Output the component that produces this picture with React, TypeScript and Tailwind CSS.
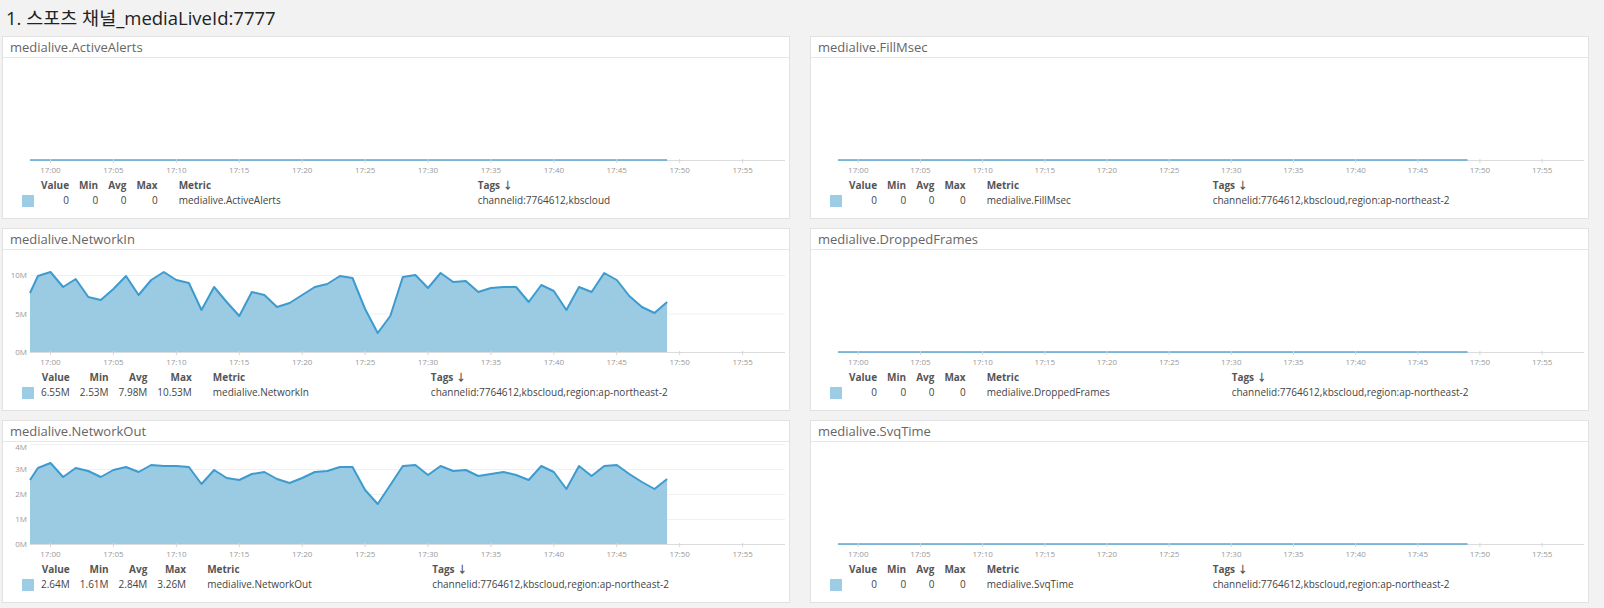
import React from "react";

type Series = { start: number; pts: number[] } | null;

const LEFT_W = 788;
const RIGHT_W = 779;

// heights in px on a 100px plot, one point per minute from 16:59 to 17:49
const netIn: Series = {
  start: 59,
  pts: [76, 80, 65, 73, 55, 52, 63, 76, 57, 72, 80, 72, 69, 42, 65, 50, 36, 60, 57, 45, 49, 57, 65, 68, 76, 74, 43, 19, 36, 75, 77, 64, 79, 70, 71, 60, 64, 65, 65, 50, 67, 61, 42, 65, 60, 79, 72, 56, 45, 39, 50],
};

const netOut: Series = {
  start: 64,
  pts: [76, 81, 67, 76, 73, 67, 74, 77, 72, 79, 78, 78, 77, 60, 74, 66, 64, 70, 72, 65, 61, 66, 72, 73, 77, 77, 54, 40, 59, 78, 79, 69, 78, 73, 74, 68, 70, 72, 69, 64, 78, 72, 55, 78, 68, 78, 79, 70, 62, 55, 65],
};

function Chart({ width, series, yTicks }: { width: number; series: Series; yTicks: { label: string; h: number }[] }) {
  const innerW = width - 2;
  const x0 = 27;
  const x1 = innerW - 4;
  const perMin = (x1 - x0) / 60;
  const xAt = (m: number) => x0 + (m + 1.63) * perMin;
  const axisY = 102;

  let line = "";
  let area = "";
  if (series) {
    const coords = [[x0, axisY - series.start], ...series.pts.map((h, i) => [xAt(i - 1), axisY - h])];
    line = coords.map((c) => c[0].toFixed(1) + "," + c[1]).join(" ");
    area = `${x0},${axisY} ${line} ${xAt(49).toFixed(1)},${axisY}`;
  }

  const ticks = Array.from({ length: 12 }, (_, i) => i * 5);

  return (
    <svg width={innerW} height={120} className="block" style={{ fontFamily: "'Open Sans', sans-serif" }}>
      {yTicks.map((t) => (
        <g key={t.label}>
          {t.h > 0 && <line x1={x0} x2={x1} y1={axisY - t.h + 0.5} y2={axisY - t.h + 0.5} stroke="#f1f1f1" />}
          <text x={24} y={Math.max(axisY - t.h + 3, 8)} fontSize={8} fill="#999" textAnchor="end">
            {t.label}
          </text>
        </g>
      ))}
      {series && (
        <>
          <polygon points={area} fill="#9acbe3" />
          <polyline points={line} fill="none" stroke="#3d9bcf" strokeWidth={2} strokeLinejoin="round" />
        </>
      )}
      <line x1={x0} x2={x1} y1={axisY + 0.5} y2={axisY + 0.5} stroke="#dcdcdc" />
      {!series && <line x1={x0} x2={xAt(49)} y1={axisY} y2={axisY} stroke="#5aa6d4" strokeWidth={1.5} />}
      {ticks.map((m) => (
        <g key={m}>
          <line x1={xAt(m)} x2={xAt(m)} y1={axisY - 1} y2={axisY + 3} stroke="#d4d4d4" />
          <text x={xAt(m)} y={axisY + 13} fontSize={8} fill="#999" textAnchor="middle">
            {`17:${m < 10 ? "0" + m : m}`}
          </text>
        </g>
      ))}
    </svg>
  );
}

type PanelProps = {
  title: string;
  width: number;
  series: Series;
  yTicks: { label: string; h: number }[];
  vals: string[];
  tags: string;
  metricW: string;
};

function Panel({ title, width, series, yTicks, vals, tags, metricW }: PanelProps) {
  return (
    <div className="h-[183px] bg-white border border-[#e2e2e2] flex flex-col" style={{ width }}>
      <div className="h-[21px] border-b border-[#e6e6e6] pl-[7px] flex items-center text-[13px] text-[#666] leading-none">
        {title}
      </div>
      <Chart width={width} series={series} yTicks={yTicks} />
      <div className="pl-[19px]">
        <table className="border-collapse text-[10px] leading-[15px] text-[#444]">
          <thead>
            <tr className="h-[15px] font-bold text-[#555]">
              <th className="w-[12px] p-0"></th>
              <th className="pl-[7px] text-right font-bold">Value</th>
              <th className="pl-[10px] text-right font-bold">Min</th>
              <th className="pl-[10px] text-right font-bold">Avg</th>
              <th className="pl-[10px] text-right font-bold">Max</th>
              <th className={`pl-[21px] text-left font-bold ${metricW}`}>Metric</th>
              <th className="text-left font-bold">Tags ↓</th>
            </tr>
          </thead>
          <tbody>
            <tr className="h-[15px]">
              <td className="p-0 align-middle">
                <div className="w-[12px] h-[12px] bg-[#9ccde5]" />
              </td>
              {vals.map((v, i) => (
                <td key={i} className={`${i === 0 ? "pl-[7px]" : "pl-[10px]"} text-right`}>
                  {v}
                </td>
              ))}
              <td className="pl-[21px]">{title}</td>
              <td>{tags}</td>
            </tr>
          </tbody>
        </table>
      </div>
    </div>
  );
}

const flat = [{ label: "", h: 0 }];
const inTicks = [
  { label: "0M", h: 0 },
  { label: "5M", h: 38.5 },
  { label: "10M", h: 77 },
];
const outTicks = [
  { label: "0M", h: 0 },
  { label: "1M", h: 25 },
  { label: "2M", h: 50 },
  { label: "3M", h: 75 },
  { label: "4M", h: 100 },
];

const TAG_LONG = "channelid:7764612,kbscloud,region:ap-northeast-2";

export default function App() {
  return (
    <div className="min-h-screen w-full bg-[#f2f2f2] pl-[2px]" style={{ fontFamily: "'Open Sans', 'Noto Sans CJK KR', sans-serif" }}>
      <div className="h-[36px] pl-[4px] flex items-center text-[18.5px] text-[#222]">1. 스포츠 채널_mediaLiveId:7777</div>
      <div className="grid grid-cols-[788px_779px] gap-x-[20px] gap-y-[9px]">
        <Panel title="medialive.ActiveAlerts" width={LEFT_W} series={null} yTicks={flat} vals={["0", "0", "0", "0"]} tags="channelid:7764612,kbscloud" metricW="w-[320px]" />
        <Panel title="medialive.FillMsec" width={RIGHT_W} series={null} yTicks={flat} vals={["0", "0", "0", "0"]} tags={TAG_LONG} metricW="w-[247px]" />
        <Panel title="medialive.NetworkIn" width={LEFT_W} series={netIn} yTicks={inTicks} vals={["6.55M", "2.53M", "7.98M", "10.53M"]} tags={TAG_LONG} metricW="w-[239px]" />
        <Panel title="medialive.DroppedFrames" width={RIGHT_W} series={null} yTicks={flat} vals={["0", "0", "0", "0"]} tags={TAG_LONG} metricW="w-[266px]" />
        <Panel title="medialive.NetworkOut" width={LEFT_W} series={netOut} yTicks={outTicks} vals={["2.64M", "1.61M", "2.84M", "3.26M"]} tags={TAG_LONG} metricW="w-[246px]" />
        <Panel title="medialive.SvqTime" width={RIGHT_W} series={null} yTicks={flat} vals={["0", "0", "0", "0"]} tags={TAG_LONG} metricW="w-[247px]" />
      </div>
    </div>
  );
}
